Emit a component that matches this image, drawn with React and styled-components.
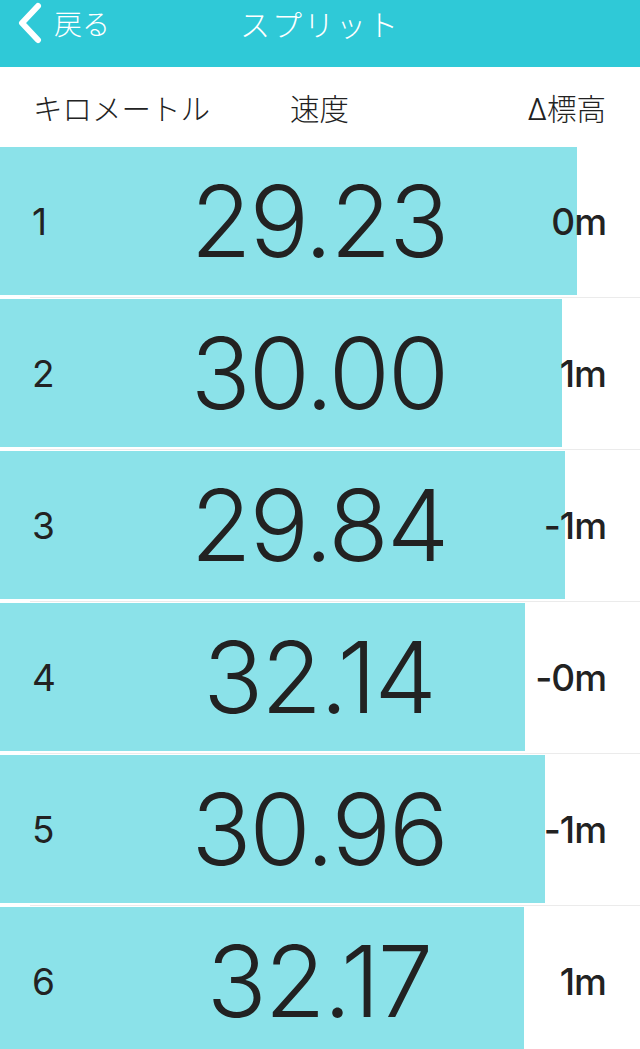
import styled, { createGlobalStyle } from "styled-components";

const GlobalStyle = createGlobalStyle`
  html, body {
    margin: 0;
    padding: 0;
    background: #ffffff;
    overflow: hidden;
  }
  body {
    font-family: "Inter", "Noto Sans CJK JP", sans-serif;
    color: #222222;
  }
`;

const Page = styled.div`
  width: 640px;
  height: 1049px;
  overflow: hidden;
  background: #ffffff;
`;

const NavBar = styled.header`
  height: 67px;
  background: #2fc9d7;
  display: grid;
  grid-template-columns: 1fr auto 1fr;
  align-items: start;
  color: #ffffff;
  font-family: "Noto Sans CJK JP", sans-serif;
  font-weight: 300;
`;

const BackButton = styled.div`
  display: flex;
  align-items: center;
  gap: 12px;
  padding-left: 16px;
  height: 46px;
  font-size: 28px;
`;

const Title = styled.div`
  height: 46px;
  display: flex;
  align-items: center;
  font-size: 30px;
  letter-spacing: 2px;
`;

const ColumnHeader = styled.div`
  height: 80px;
  display: grid;
  grid-template-columns: 1fr auto 1fr;
  align-items: center;
  padding: 0 34px 0 33px;
  font-family: "Inter", "Noto Sans CJK JP", sans-serif;
  font-weight: 300;
  font-size: 29.5px;
  color: #222222;
`;

const HeadCell = styled.div`
  text-align: ${(p) => p.$align || "left"};
`;

const Row = styled.div`
  position: relative;
  height: 148px;
  display: grid;
  grid-template-columns: 1fr auto 1fr;
  align-items: center;
  padding: 0 34px 0 32px;
`;

const Bar = styled.div`
  position: absolute;
  left: 0;
  top: 0;
  bottom: 0;
  background: #8be2e9;
  z-index: 0;
`;

const Index = styled.div`
  position: relative;
  z-index: 1;
  font-size: 37px;
  font-weight: 400;
`;

const Speed = styled.div`
  position: relative;
  z-index: 1;
  font-size: 99px;
  font-weight: 300;
  letter-spacing: -2px;
  line-height: 1;
`;

const Elevation = styled.div`
  position: relative;
  z-index: 1;
  text-align: right;
  font-size: 37px;
  font-weight: 500;
  letter-spacing: -1px;
`;

const Divider = styled.div`
  height: 4px;
  display: flex;
  align-items: center;
  padding-left: 30px;
  &::after {
    content: "";
    flex: 1;
    height: 1px;
    background: #ebebeb;
  }
`;

const splits = [
  { km: 1, speed: "29.23", elev: "0m", bar: 577 },
  { km: 2, speed: "30.00", elev: "1m", bar: 562 },
  { km: 3, speed: "29.84", elev: "-1m", bar: 565 },
  { km: 4, speed: "32.14", elev: "-0m", bar: 525 },
  { km: 5, speed: "30.96", elev: "-1m", bar: 545 },
  { km: 6, speed: "32.17", elev: "1m", bar: 524 },
];

function Chevron() {
  return (
    <svg width="26" height="42" viewBox="0 0 26 42">
      <path
        d="M22 4 L6 21 L22 38"
        fill="none"
        stroke="#ffffff"
        strokeWidth="6"
        strokeLinecap="round"
        strokeLinejoin="round"
      />
    </svg>
  );
}

export default function App() {
  return (
    <>
      <GlobalStyle />
      <Page>
        <NavBar>
          <BackButton>
            <Chevron />
            <span>戻る</span>
          </BackButton>
          <Title>スプリット</Title>
          <div />
        </NavBar>
        <ColumnHeader>
          <HeadCell>キロメートル</HeadCell>
          <HeadCell $align="center">速度</HeadCell>
          <HeadCell $align="right">Δ標高</HeadCell>
        </ColumnHeader>
        {splits.map((s, i) => (
          <div key={s.km}>
            {i > 0 && <Divider />}
            <Row>
              <Bar style={{ width: s.bar }} />
              <Index>{s.km}</Index>
              <Speed>{s.speed}</Speed>
              <Elevation>{s.elev}</Elevation>
            </Row>
          </div>
        ))}
      </Page>
    </>
  );
}
